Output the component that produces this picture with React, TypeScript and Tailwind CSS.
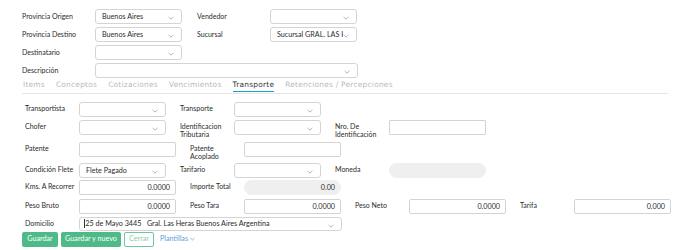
import React from "react";

const Chevron = () => (
  <svg
    width="6"
    height="4"
    viewBox="0 0 6 4"
    className="absolute right-[7px] top-[6px]"
  >
    <path d="M0.6 0.9 L3 3.1 L5.4 0.9" fill="none" stroke="#8eb2d8" strokeWidth="0.9" />
  </svg>
);

function Select({ w, value, h = "h-[15px]" }: { w: string; value?: string; h?: string }) {
  return (
    <div
      className={`relative ${w} ${h} shrink-0 rounded-[3px] border border-[#d4d4d4] bg-white pl-[6px] pr-[13px] text-[7.2px] leading-[13px] text-[#2b2b2b]`}
    >
      <div className="overflow-hidden whitespace-nowrap">{value}</div>
      <Chevron />
    </div>
  );
}

function Input({
  value,
  square,
  disabled,
}: {
  value?: string;
  square?: boolean;
  disabled?: boolean;
}) {
  const base = "w-[97px] h-[15px] shrink-0 text-right pr-[5px] text-[7.2px] leading-[13px] text-[#2b2b2b]";
  if (disabled)
    return (
      <div className={`${base} rounded-full border border-[#efefef] bg-[#efefef]`}>{value}</div>
    );
  return (
    <div
      className={`${base} border border-[#d4d4d4] bg-white ${square ? "rounded-[1px]" : "rounded-[2px]"}`}
    >
      {value}
    </div>
  );
}

function Label({ children, w }: { children: React.ReactNode; w: string }) {
  return (
    <div className={`${w} h-[15px] shrink-0 pt-[3.5px] text-[7px] leading-[7.5px] text-[#2b2b2b] whitespace-nowrap`}>{children}</div>
  );
}

function Field({ label, children, lw = "w-[54px]" }: { label: React.ReactNode; children: React.ReactNode; lw?: string }) {
  return (
    <div className="flex items-start">
      <Label w={lw}>{label}</Label>
      {children}
    </div>
  );
}

export default function App() {
  const tabs = ["Items", "Conceptos", "Cotizaciones", "Vencimientos", "Transporte", "Retenciones / Percepciones"];
  return (
    <div className="w-[690px] h-[250px] bg-white font-['Lato',sans-serif] overflow-hidden">
      {/* Top section */}
      <div className="pl-[22px] pt-[9px] flex flex-col gap-[3px]">
        <div className="flex gap-[15px]">
          <Field label="Provincia Origen" lw="w-[73px]">
            <Select w="w-[87px]" value="Buenos Aires" />
          </Field>
          <Field label="Vendedor" lw="w-[73px]">
            <Select w="w-[87px]" />
          </Field>
        </div>
        <div className="flex gap-[15px]">
          <Field label="Provincia Destino" lw="w-[73px]">
            <Select w="w-[87px]" value="Buenos Aires" />
          </Field>
          <Field label="Sucursal" lw="w-[73px]">
            <Select w="w-[87px]" value="Sucursal GRAL. LAS HERAS" />
          </Field>
        </div>
        <div className="flex gap-[15px]">
          <Field label="Destinatario" lw="w-[73px]">
            <Select w="w-[87px]" />
          </Field>
        </div>
        <div className="flex gap-[15px]">
          <Field label="Descripción" lw="w-[73px]">
            <Select w="w-[263px]" />
          </Field>
        </div>
      </div>

      {/* Tabs */}
      <div className="ml-[22px] mr-[22px] mt-[2px] pb-[1px] border-b border-[#e6e6e6] flex gap-[11px] pl-[1px] font-['DejaVu_Sans',sans-serif] text-[7.4px] tracking-[0.25px]">
        {tabs.map((t) => (
          <div
            key={t}
            className={`h-[11.5px] leading-[9px] border-b-[1.5px] ${
              t === "Transporte" ? "border-[#1d9bd1] text-[#333]" : "border-transparent text-[#b9b9b9]"
            }`}
          >
            {t}
          </div>
        ))}
      </div>

      {/* Transporte form */}
      <div className="pl-[25px] pt-[8px] flex flex-col">
        <div className="flex gap-[14px]">
          <Field label="Transportista">
            <Select w="w-[87px]" />
          </Field>
          <Field label="Transporte">
            <Select w="w-[87px]" />
          </Field>
        </div>
        <div className="flex gap-[14px] mt-[3px]">
          <Field label="Chofer">
            <Select w="w-[87px]" />
          </Field>
          <Field label={<>Identificacion<br />Tributaria</>}>
            <Select w="w-[87px]" />
          </Field>
          <Field label={<>Nro. De<br />Identificación</>}>
            <Input square />
          </Field>
        </div>
        <div className="flex gap-[14px] mt-[7px]">
          <Field label="Patente">
            <Input />
          </Field>
          <Field label={<>Patente<br />Acoplado</>}>
            <Input />
          </Field>
        </div>
        <div className="flex gap-[14px] mt-[6px]">
          <Field label="Condición Flete">
            <Select w="w-[87px]" value="Flete Pagado" />
          </Field>
          <Field label="Tarifario">
            <Select w="w-[87px]" />
          </Field>
          <Field label="Moneda">
            <Input disabled />
          </Field>
        </div>
        <div className="flex gap-[14px] mt-[2px]">
          <Field label="Kms. A Recorrer">
            <Input value="0.0000" />
          </Field>
          <Field label="Importe Total">
            <Input disabled value="0.00" />
          </Field>
        </div>
        <div className="flex gap-[14px] mt-[4px]">
          <Field label="Peso Bruto">
            <Input value="0.0000" />
          </Field>
          <Field label="Peso Tara">
            <Input value="0.0000" />
          </Field>
          <Field label="Peso Neto">
            <Input value="0.0000" />
          </Field>
          <Field label="Tarifa">
            <Input value="0.000" />
          </Field>
        </div>
        <div className="flex gap-[14px] mt-[3px]">
          <Field label="Domicilio">
            <div className="relative w-[263px] h-[14px] shrink-0 rounded-[3px] border border-[#d4d4d4] bg-white pl-[4px] text-[7.2px] leading-[12px] text-[#2b2b2b] whitespace-nowrap flex items-center">
              <span className="inline-block w-[0.8px] h-[9px] bg-[#333] mr-[0.5px]" />
              <span>25 de Mayo 3445&nbsp;&nbsp; Gral. Las Heras Buenos Aires Argentina</span>
              <Chevron />
            </div>
          </Field>
        </div>
      </div>

      {/* Buttons */}
      <div className="pl-[22px] mt-0 flex items-center gap-[3px] text-[7.2px]">
        <div className="w-[36px] h-[15px] rounded-[2px] bg-[#4dba88] text-white flex items-center justify-center">Guardar</div>
        <div className="w-[60px] h-[15px] rounded-[2px] bg-[#4dba88] text-white flex items-center justify-center">Guardar y nuevo</div>
        <div className="w-[30px] h-[15px] rounded-[2px] border border-[#6cc79d] bg-white text-[#86d0ad] flex items-center justify-center">Cerrar</div>
        <div className="ml-[3px] flex items-center gap-[2px] text-[#5d9fd8]">
          Plantillas
          <svg width="5" height="4" viewBox="0 0 6 4">
            <path d="M0.6 0.9 L3 3.1 L5.4 0.9" fill="none" stroke="#5d9fd8" strokeWidth="0.9" />
          </svg>
        </div>
      </div>
    </div>
  );
}
